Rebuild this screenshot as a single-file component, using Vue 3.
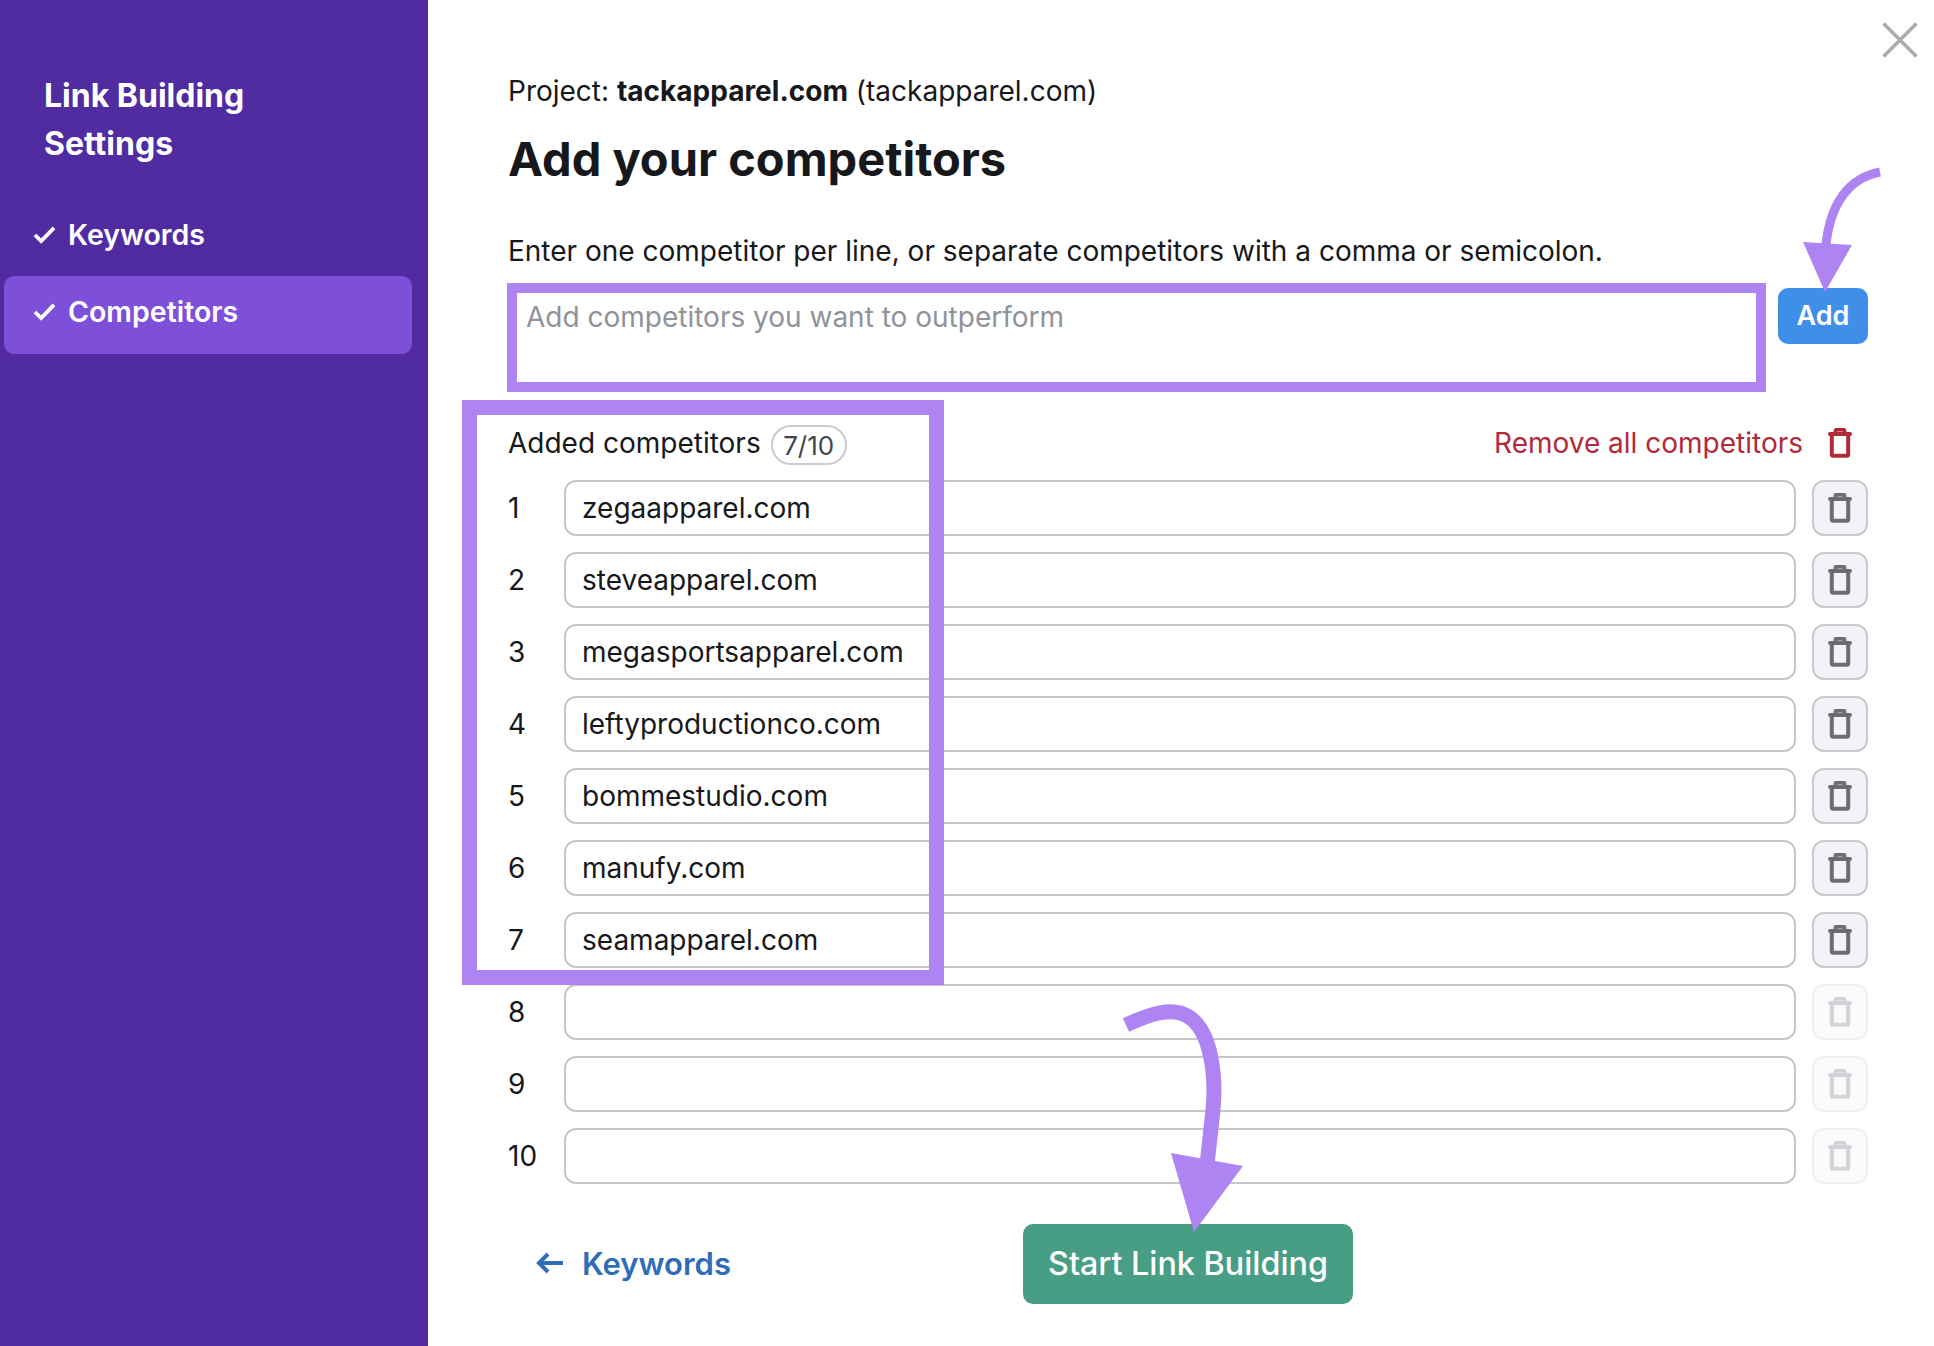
<script setup>
const competitors = ['zegaapparel.com','steveapparel.com','megasportsapparel.com','leftyproductionco.com','bommestudio.com','manufy.com','seamapparel.com','','','']
</script>

<template>
  <div class="page">
    <aside class="sidebar">
      <h2 class="side-title">Link Building<br />Settings</h2>
      <nav class="nav">
        <a class="nav-item">
          <svg class="check" viewBox="0 0 24 20"><path d="M2 10.500 8.500 17 22 3" /></svg>
          <span>Keywords</span>
        </a>
        <a class="nav-item active">
          <svg class="check" viewBox="0 0 24 20"><path d="M2 10.500 8.500 17 22 3" /></svg>
          <span>Competitors</span>
        </a>
      </nav>
    </aside>

    <main class="main">
      <p class="project">Project: <b>tackapparel.com</b> (tackapparel.com)</p>
      <h1 class="heading">Add your competitors</h1>
      <p class="desc">Enter one competitor per line, or separate competitors with a comma or semicolon.</p>

      <div class="add-row">
        <textarea class="add-input" placeholder="Add competitors you want to outperform"></textarea>
        <button class="add-btn">Add</button>
      </div>

      <div class="list-head">
        <div class="list-title">
          <span>Added competitors</span>
          <span class="badge">7/10</span>
        </div>
        <a class="remove-all">
          <span>Remove all competitors</span>
          <svg class="trash" viewBox="0 0 24 30"><path class="lid" d="M2 6h20" /><path class="handle" d="M7.500 5V3.500a2 2 0 0 1 2-2h5a2 2 0 0 1 2 2V5" /><rect x="3.800" y="6" width="16.400" height="21.800" rx="1.500" /></svg>
        </a>
      </div>

      <div class="rows">
        <div v-for="(c, i) in competitors" :key="i" class="row">
          <span class="num">{{ i + 1 }}</span>
          <input class="field" :value="c" />
          <button class="del" :class="{ disabled: !c }">
            <svg class="trash" viewBox="0 0 24 30"><path class="lid" d="M2 6h20" /><path class="handle" d="M7.500 5V3.500a2 2 0 0 1 2-2h5a2 2 0 0 1 2 2V5" /><rect x="3.800" y="6" width="16.400" height="21.800" rx="1.500" /></svg>
          </button>
        </div>
      </div>

      <div class="footer">
        <a class="back">
          <svg class="back-arrow" viewBox="0 0 30 24"><path d="M28 12H4M13 3l-9 9 9 9" /></svg>
          <span>Keywords</span>
        </a>
        <button class="start">Start Link Building</button>
      </div>
    </main>

    <svg class="close" viewBox="0 0 36 36"><path d="M1.500 1.500l33 33M34.500 1.500l-33 33" /></svg>
    <div class="highlight"></div>
    <svg class="arrows" viewBox="0 0 1934 1346">
      <path class="shaft thin" d="M1880 172C1848 178 1830 205 1826 245" />
      <path class="head" d="M1803 242 1852 245 1825 292Z" />
      <path class="shaft thick" d="M1126 1025C1150 1014 1172 1006 1189 1017 1212 1032 1216 1078 1213 1110L1207 1165" />
      <path class="head" d="M1171 1153 1243 1166 1194 1232Z" />
    </svg>
  </div>
</template>

<style>
html, body { margin: 0; background: #fff; overflow: hidden; }
</style>

<style scoped>
.page {
  position: relative;
  display: flex;
  width: 1934px;
  height: 1346px;
  overflow: hidden;
  background: #fff;
  color: #17181c;
  font-family: Inter, "Liberation Sans", sans-serif;
}
.sidebar {
  flex: 0 0 428px;
  box-sizing: border-box;
  padding: 72px 16px 0 4px;
  background: #512ca1;
  color: #fff;
}
.side-title {
  margin: 0 0 30px 40px;
  font-size: 32px;
  line-height: 48px;
  font-weight: 700;
}
.nav-item {
  box-sizing: border-box;
  display: flex;
  align-items: center;
  gap: 12px;
  height: 78px;
  padding: 0 0 6px 29px;
  border-radius: 10px;
  font-size: 28.500px;
  font-weight: 600;
}
.nav-item.active {
  padding-bottom: 8px;
  background: #7e4fd8;
}
.check { width: 23px; height: 19px; }
.check path { fill: none; stroke: #fff; stroke-width: 4; }
.main {
  flex: 1;
  padding: 73px 66px 0 80px;
  min-width: 0;
}
.project, .desc {
  margin: 0;
  font-size: 28px;
  line-height: 36px;
}
.project b { font-weight: 700; }
.heading {
  margin: 20px 0 0;
  font-size: 47px;
  line-height: 60px;
  font-weight: 700;
}
.desc { margin-top: 44px; }
.add-row {
  display: flex;
  align-items: flex-start;
  gap: 12px;
  margin: 14px 0 0 -1px;
}
.add-input {
  flex: 1;
  box-sizing: border-box;
  height: 109px;
  padding: 6px 9px;
  border: 10px solid #ad84f2;
  outline: none;
  resize: none;
  font: 28px/36px Inter, "Liberation Sans", sans-serif;
}
.add-input::placeholder { color: #8f929b; opacity: 1; }
.add-btn {
  flex: 0 0 90px;
  height: 56px;
  margin-top: 5px;
  padding: 0 0 2px;
  border: 0;
  border-radius: 10px;
  background: #3f8fe8;
  color: #fff;
  font: 600 27px Inter, "Liberation Sans", sans-serif;
}
.list-head {
  box-sizing: border-box;
  display: flex;
  align-items: center;
  justify-content: space-between;
  height: 40px;
  margin-top: 32px;
  padding-bottom: 3px;
  font-size: 28px;
}
.list-title { display: flex; align-items: center; gap: 10px; }
.badge {
  box-sizing: border-box;
  display: flex;
  align-items: center;
  justify-content: center;
  width: 76px;
  height: 40px;
  margin-top: 5px;
  border: 2px solid #c9cbd0;
  border-radius: 20px;
  color: #44464d;
  font-size: 26px;
}
.remove-all {
  display: flex;
  align-items: center;
  gap: 25px;
  padding-right: 16px;
  color: #b02a3c;
}
.remove-all .trash path, .remove-all .trash rect { stroke: #b02a3c; }
.rows {
  display: flex;
  flex-direction: column;
  gap: 16px;
  margin-top: 16px;
}
.row {
  display: grid;
  grid-template-columns: 56px 1fr 56px;
  align-items: center;
  height: 56px;
  font-size: 28px;
}
.num { line-height: 56px; }
.field {
  box-sizing: border-box;
  width: calc(100% - 16px);
  height: 56px;
  padding: 0 16px;
  border: 2px solid #c6c6c8;
  border-radius: 12px;
  outline: none;
  color: #17181c;
  font: 28px Inter, "Liberation Sans", sans-serif;
}
.del {
  box-sizing: border-box;
  display: flex;
  align-items: center;
  justify-content: center;
  width: 56px;
  height: 56px;
  padding: 0;
  border: 2px solid #c6c8cd;
  border-radius: 12px;
  background: #f3f3f7;
}
.trash { width: 24px; height: 30px; flex: none; }
.trash path, .trash rect { fill: none; stroke: #6b6c75; stroke-width: 4; }
.trash .lid { stroke-linecap: round; }
.del.disabled { background: #fafafc; border-color: #eeeef1; }
.del.disabled .trash path, .del.disabled .trash rect { stroke: #d2d3d6; }
.footer {
  display: flex;
  align-items: center;
  margin-top: 40px;
  padding-left: 27px;
}
.back {
  display: flex;
  align-items: center;
  gap: 17px;
  width: 488px;
  padding-bottom: 2px;
  color: #2f6db8;
  font-size: 31px;
  font-weight: 600;
}
.back-arrow { width: 30px; height: 24px; flex: none; }
.back-arrow path { fill: none; stroke: #2f6db8; stroke-width: 4; }
.start {
  width: 330px;
  height: 80px;
  padding: 0 0 2px;
  border: 0;
  border-radius: 10px;
  background: #489d85;
  color: #fff;
  font: 500 32.300px Inter, "Liberation Sans", sans-serif;
}
.close {
  position: absolute;
  top: 22px;
  right: 16px;
  width: 36px;
  height: 36px;
}
.close path { fill: none; stroke: #a9acb1; stroke-width: 3.500; }
.highlight {
  position: absolute;
  left: 462px;
  top: 400px;
  box-sizing: border-box;
  width: 482px;
  height: 585px;
  border: 15px solid #ad84f2;
  pointer-events: none;
}
.arrows {
  position: absolute;
  inset: 0;
  width: 1934px;
  height: 1346px;
  pointer-events: none;
}
.shaft { fill: none; stroke: #ad84f2; }
.thin { stroke-width: 9; }
.thick { stroke-width: 15; }
.head { fill: #ad84f2; }
</style>
